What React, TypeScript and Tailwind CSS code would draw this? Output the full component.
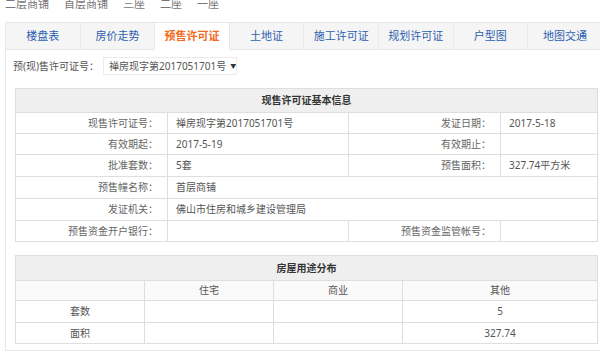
import React from "react";

const floors = ["二层商铺", "首层商铺", "三座", "二座", "一座"];
const tabs = ["楼盘表", "房价走势", "预售许可证", "土地证", "施工许可证", "规划许可证", "户型图", "地图交通"];

const lbl = "border border-[#dedede] text-right pr-[9px] text-[#666] font-normal";
const val = "border border-[#dedede] text-left pl-[8px] text-[#555]";
const cell = "border border-[#dedede]";

export default function App() {
  return (
    <div className="w-[600px] h-[361px] overflow-hidden bg-white text-[10px] whitespace-nowrap font-['Noto_Sans','Noto_Sans_CJK_SC',sans-serif]">
      {/* floor switcher, cut at the top */}
      <div className="h-[22px] overflow-hidden">
        <div className="flex gap-[15px] pl-[5px] -mt-[4px] leading-[16px] text-[11px] text-[#777]">
          {floors.map((f) => (
            <span key={f}>{f}</span>
          ))}
        </div>
      </div>

      <div className="ml-[5px] h-[329px] border-l border-b border-[#e8e8e8]">
        {/* tabs */}
        <div className="flex h-[28px] bg-[#f5f5f5] border-t border-b border-[#e6e6e6]">
          {tabs.map((t, i) => (
            <div
              key={t}
              className={
                i === 2
                  ? "w-[74.6px] shrink-0 flex items-center justify-center bg-white text-[#f26a1b] font-bold text-[11px] -mb-px border-r border-[#e6e6e6]"
                  : "w-[74.6px] shrink-0 flex items-center justify-center text-[#2d5fb0] text-[11px] border-r border-[#e9e9e9]"
              }
            >
              {t}
            </div>
          ))}
        </div>

        {/* permit selector */}
        <div className="flex items-center mt-[7px] h-[18px] pl-[7px]">
          <span className="text-[#555]">预(现)售许可证号：</span>
          <div className="ml-[4px] h-[18px] w-[134px] border border-[#ececec] flex items-center pl-[5px] text-[#555]">
            <span>禅房现字第2017051701号</span>
            <span className="ml-[4px] text-[6px] text-[#333]">▼</span>
          </div>
        </div>

        {/* basic info */}
        <table className="ml-[9px] mt-[13px] w-[582px] border-collapse table-fixed">
          <colgroup>
            <col className="w-[152px]" />
            <col className="w-[181px]" />
            <col className="w-[152px]" />
            <col className="w-[97px]" />
          </colgroup>
          <tbody>
            <tr className="h-[24px] bg-[#efefef]">
              <th colSpan={4} className="border border-[#dedede] text-center font-bold text-[#333]">
                现售许可证基本信息
              </th>
            </tr>
            <tr className="h-[21px]">
              <td className={lbl}>现售许可证号：</td>
              <td className={val}>禅房现字第2017051701号</td>
              <td className={lbl}>发证日期：</td>
              <td className={val}>2017-5-18</td>
            </tr>
            <tr className="h-[21px]">
              <td className={lbl}>有效期起：</td>
              <td className={val}>2017-5-19</td>
              <td className={lbl}>有效期止：</td>
              <td className={val}></td>
            </tr>
            <tr className="h-[22px]">
              <td className={lbl}>批准套数：</td>
              <td className={val}>5套</td>
              <td className={lbl}>预售面积：</td>
              <td className={val}>327.74平方米</td>
            </tr>
            <tr className="h-[22px]">
              <td className={lbl}>预售幢名称：</td>
              <td colSpan={3} className={val}>首层商铺</td>
            </tr>
            <tr className="h-[22px]">
              <td className={lbl}>发证机关：</td>
              <td colSpan={3} className={val}>佛山市住房和城乡建设管理局</td>
            </tr>
            <tr className="h-[21px]">
              <td className={lbl}>预售资金开户银行：</td>
              <td className={val}></td>
              <td className={lbl}>预售资金监管帐号：</td>
              <td className={val}></td>
            </tr>
          </tbody>
        </table>

        {/* usage distribution */}
        <table className="ml-[9px] mt-[13px] w-[582px] border-collapse table-fixed text-center text-[#555]">
          <colgroup>
            <col className="w-[129px]" />
            <col className="w-[129px]" />
            <col className="w-[129px]" />
            <col className="w-[195px]" />
          </colgroup>
          <tbody>
            <tr className="h-[25px] bg-[#efefef]">
              <th colSpan={4} className="border border-[#dedede] font-bold text-[#333]">
                房屋用途分布
              </th>
            </tr>
            <tr className="h-[20px] bg-[#fafafa]">
              <td className={cell}></td>
              <td className={cell}>住宅</td>
              <td className={cell}>商业</td>
              <td className={cell}>其他</td>
            </tr>
            <tr className="h-[22px]">
              <td className={cell}>套数</td>
              <td className={cell}></td>
              <td className={cell}></td>
              <td className={cell}>5</td>
            </tr>
            <tr className="h-[21px]">
              <td className={cell}>面积</td>
              <td className={cell}></td>
              <td className={cell}></td>
              <td className={cell}>327.74</td>
            </tr>
          </tbody>
        </table>
      </div>
    </div>
  );
}
